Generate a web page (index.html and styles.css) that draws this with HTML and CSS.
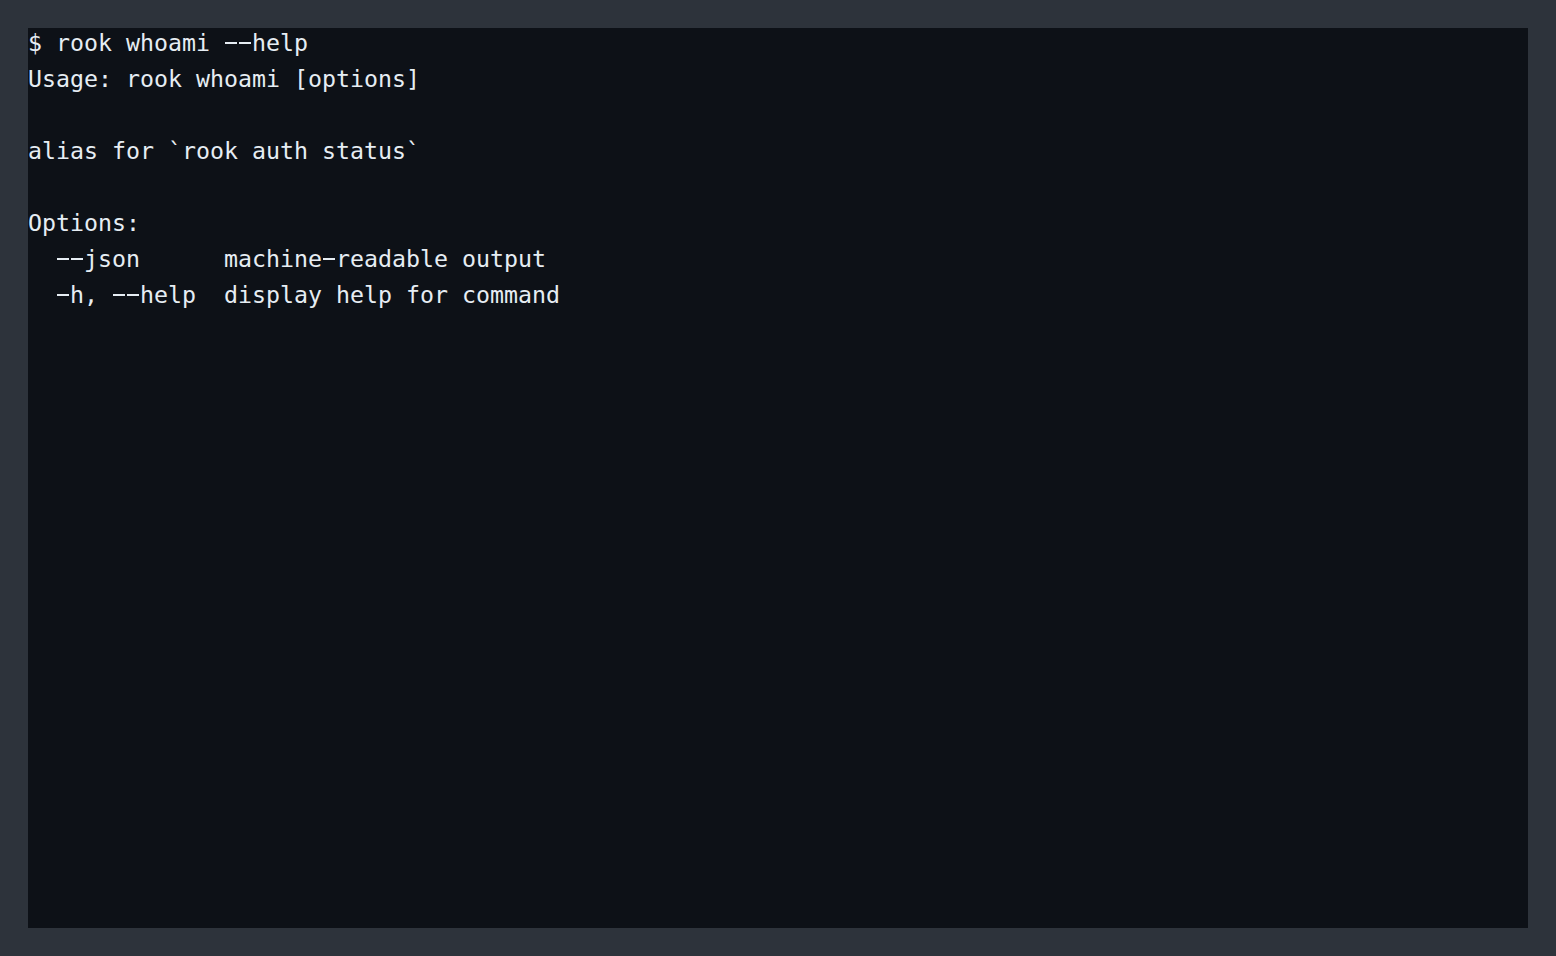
FILE: index.html
```html
<!DOCTYPE html>
<html>
<head>
<meta charset="utf-8">
<link rel="stylesheet" href="styles.css">
</head>
<body>
<main class="terminal">
  <div class="output">
    <div class="line">$ rook whoami <span class="dash">-</span><span class="dash">-</span>help</div>
    <div class="line">Usage: rook whoami [options]</div>
    <div class="line"></div>
    <div class="line">alias for `rook auth status`</div>
    <div class="line"></div>
    <div class="line">Options:</div>
    <div class="line">  <span class="dash">-</span><span class="dash">-</span>json      machine<span class="dash">-</span>readable output</div>
    <div class="line">  <span class="dash">-</span>h, <span class="dash">-</span><span class="dash">-</span>help  display help for command</div>
  </div>
</main>
</body>
</html>
```
FILE: styles.css
```css
html, body {
  margin: 0;
  padding: 0;
}
body {
  background: #2d333b;
  padding: 28px;
  width: 1500px;
  height: 900px;
}
.terminal {
  width: 1500px;
  height: 900px;
  background: #0d1117;
  overflow: hidden;
}
.output {
  margin-top: -3px;
  font-family: "DejaVu Sans Mono", monospace;
  font-size: 23.25px;
  line-height: 36px;
  color: #e6edf3;
}
.line {
  height: 36px;
  white-space: pre;
}
.dash {
  display: inline-block;
  vertical-align: top;
  height: 36px;
  line-height: 32px;
  background-image: linear-gradient(to bottom,
    transparent 17px, #e6edf3 17px, #e6edf3 19px, transparent 19px);
  background-size: calc(100% - 2px) 100%;
  background-position: center top;
  background-repeat: no-repeat;
}
```
